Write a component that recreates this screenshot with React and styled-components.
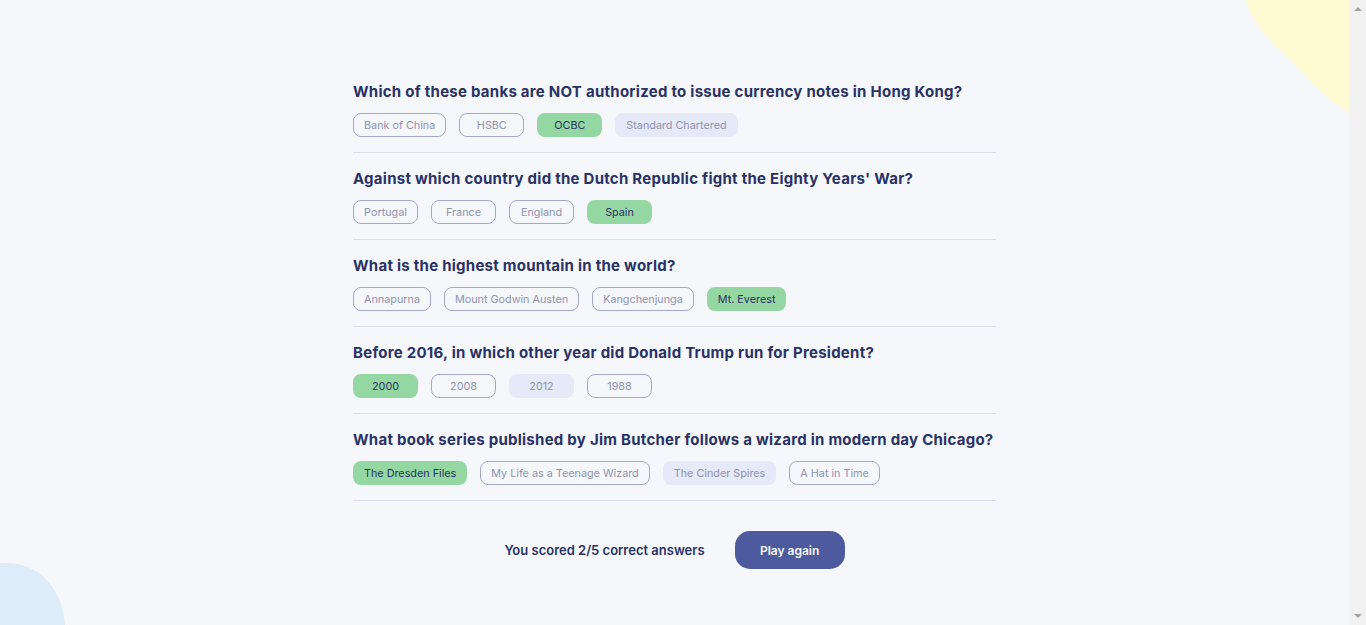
import React from "react";
import styled, { createGlobalStyle } from "styled-components";

const GlobalStyle = createGlobalStyle`
  html, body { margin: 0; height: 100%; overflow: hidden; }
  body {
    background: #F5F7FB;
    font-family: "Inter", "Liberation Sans", sans-serif;
    color: #293264;
  }
`;

const Window = styled.div`
  height: 100vh;
  display: flex;
  background: #F5F7FB;
`;

const Page = styled.main`
  position: relative;
  flex: 1;
  height: 100vh;
  display: flex;
  flex-direction: column;
  align-items: center;
  padding-top: 66px;
  box-sizing: border-box;
  overflow: hidden;
`;

const ScrollTrack = styled.div`
  width: 17px;
  flex: none;
  background: #F1F1F1;
  display: flex;
  flex-direction: column;
  justify-content: space-between;
  align-items: center;
  padding: 7px 0;
  box-sizing: border-box;
`;

const Arrow = styled.span`
  width: 0;
  height: 0;
  border-left: 4px solid transparent;
  border-right: 4px solid transparent;
  ${p =>
    p.$down
      ? "border-top: 4px solid #A3A3A3;"
      : "border-bottom: 4px solid #A3A3A3;"}
`;

const BlobTop = styled.svg`
  position: absolute;
  top: 0;
  right: 0;
  width: 104px;
  height: 113px;
  z-index: 0;
`;

const BlobBottom = styled.svg`
  position: absolute;
  left: 0;
  bottom: 0;
  width: 66px;
  height: 62px;
  z-index: 0;
`;

const Quiz = styled.section`
  position: relative;
  z-index: 1;
  width: 643px;
  display: flex;
  flex-direction: column;
`;

const Item = styled.div`
  padding: 16px 0 15px;
  border-bottom: 1px solid #DBDEF0;
`;

const Question = styled.h2`
  margin: 0 0 12px;
  font-family: "Inter", "Liberation Sans", sans-serif;
  font-weight: 700;
  font-size: 15px;
  letter-spacing: 0.26px;
  line-height: 19px;
  color: #293264;
  white-space: nowrap;
`;

const Answers = styled.div`
  display: flex;
  gap: 13px;
`;

const Answer = styled.button`
  height: 24px;
  min-width: 65px;
  padding: 0 10px;
  box-sizing: border-box;
  border-radius: 8px;
  font-family: "Inter", "Liberation Sans", sans-serif;
  font-size: 10.8px;
  font-weight: 400;
  cursor: pointer;
  color: ${p => (p.$state === "correct" ? "#293264" : "#8F94AF")};
  background: ${p =>
    p.$state === "correct" ? "#94D7A2" : p.$state === "wrong" ? "#E5E9F8" : "transparent"};
  border: ${p => (p.$state === "none" ? "0.8px solid #A1A9CC" : "0.8px solid transparent")};
`;

const Footer = styled.div`
  position: relative;
  z-index: 1;
  margin-top: 30px;
  display: flex;
  align-items: center;
  gap: 30px;
`;

const Score = styled.p`
  margin: 0;
  font-size: 13px;
  font-weight: 600;
  color: #293264;
`;

const PlayButton = styled.button`
  width: 110px;
  height: 38px;
  border: none;
  border-radius: 15px;
  background: #4D5B9E;
  color: #F5F7FB;
  font-family: "Inter", "Liberation Sans", sans-serif;
  font-size: 12px;
  font-weight: 600;
  cursor: pointer;
`;

const data = [
  {
    q: "Which of these banks are NOT authorized to issue currency notes in Hong Kong?",
    a: ["Bank of China", "HSBC", "OCBC", "Standard Chartered"],
    correct: 2,
    chosen: 3,
  },
  {
    q: "Against which country did the Dutch Republic fight the Eighty Years' War?",
    a: ["Portugal", "France", "England", "Spain"],
    correct: 3,
    chosen: 3,
  },
  {
    q: "What is the highest mountain in the world?",
    a: ["Annapurna", "Mount Godwin Austen", "Kangchenjunga", "Mt. Everest"],
    correct: 3,
    chosen: 3,
  },
  {
    q: "Before 2016, in which other year did Donald Trump run for President?",
    a: ["2000", "2008", "2012", "1988"],
    correct: 0,
    chosen: 2,
  },
  {
    q: "What book series published by Jim Butcher follows a wizard in modern day Chicago?",
    a: ["The Dresden Files", "My Life as a Teenage Wizard", "The Cinder Spires", "A Hat in Time"],
    correct: 0,
    chosen: 2,
  },
];

export default function App() {
  return (
    <>
      <GlobalStyle />
      <Window>
        <Page>
          <BlobTop viewBox="0 0 104 113" preserveAspectRatio="none">
            <path d="M1 0 C3 12 15 32 35 50 C55 68 75 95 104 113 L104 0 Z" fill="#FFFAD1" />
          </BlobTop>
          <BlobBottom viewBox="0 0 66 62" preserveAspectRatio="none">
            <path d="M0 62 L0 0 L6 0 C38 0 62 24 65 62 Z" fill="#DEEBF8" />
          </BlobBottom>
          <Quiz>
            {data.map((item, i) => (
              <Item key={i}>
                <Question>{item.q}</Question>
                <Answers>
                  {item.a.map((ans, j) => {
                    const state =
                      j === item.correct ? "correct" : j === item.chosen ? "wrong" : "none";
                    return (
                      <Answer key={j} $state={state}>
                        {ans}
                      </Answer>
                    );
                  })}
                </Answers>
              </Item>
            ))}
          </Quiz>
          <Footer>
            <Score>You scored 2/5 correct answers</Score>
            <PlayButton>Play again</PlayButton>
          </Footer>
        </Page>
        <ScrollTrack>
          <Arrow />
          <Arrow $down />
        </ScrollTrack>
      </Window>
    </>
  );
}
